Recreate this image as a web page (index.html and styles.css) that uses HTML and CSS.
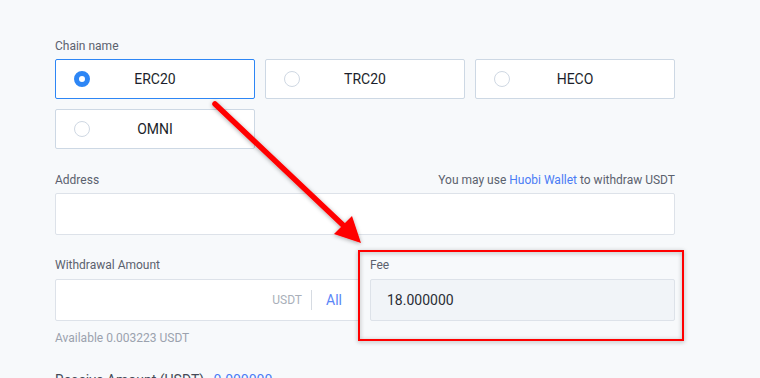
FILE: index.html
```html
<!DOCTYPE html>
<html>
<head>
<meta charset="utf-8">
<link rel="stylesheet" href="styles.css">
</head>
<body>
<div class="form">
  <div class="label">Chain name</div>
  <div class="chains">
    <div class="chain active"><span class="radio"></span><span class="chain-name">ERC20</span></div>
    <div class="chain"><span class="radio"></span><span class="chain-name">TRC20</span></div>
    <div class="chain"><span class="radio"></span><span class="chain-name">HECO</span></div>
    <div class="chain"><span class="radio"></span><span class="chain-name">OMNI</span></div>
  </div>

  <div class="label-row addr-label">
    <span class="label">Address</span>
    <span class="hint">You may use <span class="link">Huobi Wallet</span> to withdraw USDT</span>
  </div>
  <div class="input"></div>

  <div class="two-col">
    <div class="col">
      <div class="label">Withdrawal Amount</div>
      <div class="input amount">
        <span class="unit">USDT</span>
        <span class="divider"></span>
        <span class="all">All</span>
      </div>
      <div class="available">Available 0.003223 USDT</div>
    </div>
    <div class="col">
      <div class="label">Fee</div>
      <div class="input fee">18.000000</div>
    </div>
  </div>

  <div class="receive">Receive Amount (USDT) <span class="link">0.000000</span></div>
</div>

<svg class="annotation" width="760" height="378" viewBox="0 0 760 378">
  <defs>
    <filter id="sh" x="-20%" y="-20%" width="140%" height="140%">
      <feDropShadow dx="0" dy="1" stdDeviation="2.2" flood-color="#000" flood-opacity="0.35"/>
    </filter>
  </defs>
  <g filter="url(#sh)">
    <rect x="359" y="251" width="324" height="89" fill="none" stroke="#ff0000" stroke-width="2"/>
    <line x1="215" y1="104" x2="344" y2="226" stroke="#ff0000" stroke-width="5.5" stroke-linecap="round"/>
    <polygon points="361,243 334,234 352,216" fill="#ff0000"/>
  </g>
</svg>
</body>
</html>
```

FILE: styles.css
```css
html, body {
  margin: 0;
  padding: 0;
}
body {
  background: #f7f9fb;
  font-family: Roboto, "Liberation Sans", Arial, sans-serif;
  width: 760px;
  height: 378px;
  overflow: hidden;
  position: relative;
}
.form {
  padding: 38px 0 0 55px;
  width: 620px;
}
.label {
  font-size: 12px;
  line-height: 16px;
  color: #5b616e;
}
.form > .label {
  margin-bottom: 5px;
}
.chains {
  display: grid;
  grid-template-columns: repeat(3, 200px);
  grid-auto-rows: 40px;
  gap: 10px;
}
.chain {
  box-sizing: border-box;
  background: #fff;
  border: 1px solid #cdd8e4;
  border-radius: 2px;
  display: flex;
  align-items: center;
  position: relative;
}
.chain.active {
  border-color: #2d86f5;
}
.radio {
  box-sizing: border-box;
  width: 16px;
  height: 16px;
  border-radius: 50%;
  border: 1px solid #cfd8e3;
  background: #fff;
  margin-left: 18px;
  flex: none;
}
.chain.active .radio {
  border: 5px solid #2d86f5;
  background: #fff;
}
.chain-name {
  position: absolute;
  left: 0;
  right: 0;
  text-align: center;
  font-size: 14px;
  color: #1c1f2b;
}
.label-row {
  display: flex;
  justify-content: space-between;
  align-items: center;
  height: 16px;
  margin-bottom: 5px;
}
.addr-label {
  margin-top: 23px;
}
.hint {
  font-size: 12px;
  color: #5b616e;
}
.link {
  color: #4a7cf5;
}
.input {
  box-sizing: border-box;
  height: 42px;
  background: #fff;
  border: 1px solid #dde2e9;
  border-radius: 2px;
}
.two-col {
  display: grid;
  grid-template-columns: 305px 305px;
  gap: 10px;
  margin-top: 22px;
}
.col .label {
  margin-bottom: 6px;
}
.amount {
  display: flex;
  align-items: center;
  justify-content: flex-end;
  padding-right: 17px;
}
.unit {
  font-size: 12px;
  color: #a9afb9;
}
.divider {
  width: 1px;
  height: 20px;
  background: #d6dbe2;
  margin: 0 14px 0 9px;
}
.all {
  font-size: 14px;
  color: #5a86f7;
}
.fee {
  background: #f1f4f8;
  display: flex;
  align-items: center;
  padding-left: 16px;
  font-size: 14px;
  color: #2a2d36;
}
.available {
  margin-top: 9px;
  font-size: 12px;
  line-height: 16px;
  color: #9ba2ae;
}
.receive {
  margin-top: 25px;
  font-size: 14px;
  line-height: 18px;
  color: #444a57;
}
.receive .link {
  margin-left: 6px;
}
.annotation {
  position: absolute;
  left: 0;
  top: 0;
  pointer-events: none;
}
```
